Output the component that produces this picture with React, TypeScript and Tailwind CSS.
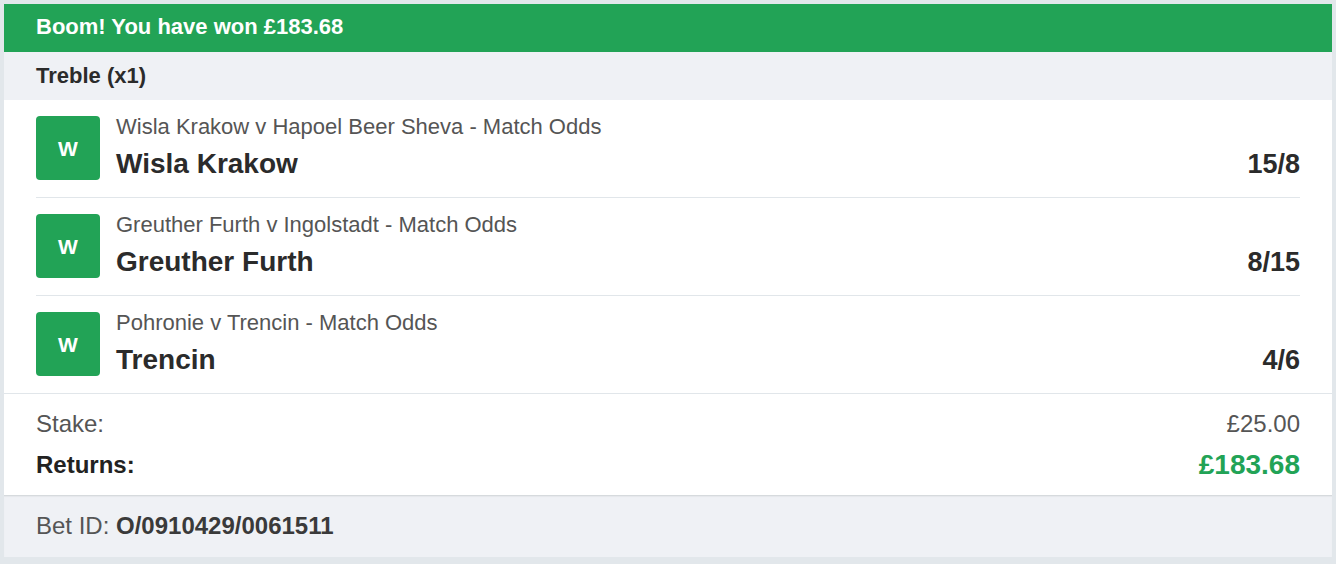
import React from 'react';

interface Selection {
  event: string;
  name: string;
  odds: string;
  result: string;
}

const selections: Selection[] = [
  { event: 'Wisla Krakow v Hapoel Beer Sheva - Match Odds', name: 'Wisla Krakow', odds: '15/8', result: 'W' },
  { event: 'Greuther Furth v Ingolstadt - Match Odds', name: 'Greuther Furth', odds: '8/15', result: 'W' },
  { event: 'Pohronie v Trencin - Match Odds', name: 'Trencin', odds: '4/6', result: 'W' },
];

function SelectionRow({ s, last }: { s: Selection; last: boolean }) {
  return (
    <div className="px-8">
      <div className={`flex gap-4 pt-4 pb-[17px] ${last ? '' : 'border-b border-[#e1e6ea]'}`}>
        <div className="w-16 h-16 shrink-0 rounded-[4px] bg-[#22a356] flex items-center justify-center">
          <span className="text-white font-bold text-[21px] leading-none">{s.result}</span>
        </div>
        <div className="flex-1 min-w-0">
          <div className="text-[22px] leading-[22px] text-[#555555]">{s.event}</div>
          <div className="mt-3 flex justify-between items-center">
            <span className="text-[28px] leading-[28px] font-bold text-[#2b2b2b]">{s.name}</span>
            <span className="text-[27px] leading-[28px] font-bold text-[#2b2b2b]">{s.odds}</span>
          </div>
        </div>
      </div>
    </div>
  );
}

export default function App() {
  return (
    <div className="min-h-screen bg-[#e2e7eb] p-1 pb-[6px]" style={{ fontFamily: '"Liberation Sans", Arial, sans-serif' }}>
      <div className="bg-white">
        {/* Win banner */}
        <div className="h-12 bg-[#22a356] flex items-center px-8 pb-[3px]">
          <span className="text-white font-bold text-[22px]">Boom! You have won £183.68</span>
        </div>

        {/* Bet type */}
        <div className="h-12 bg-[#eff1f5] flex items-center px-8 pb-[2px]">
          <span className="text-[#2b2b2b] font-bold text-[22px]">Treble (x1)</span>
        </div>

        {/* Legs */}
        <div className="border-b border-[#e1e6ea]">
          {selections.map((s, i) => (
            <SelectionRow key={i} s={s} last={i === selections.length - 1} />
          ))}
        </div>

        {/* Totals */}
        <div className="px-8 pt-[15px] pb-[15px] flex flex-col gap-[11px]">
          <div className="h-[30px] flex items-center justify-between text-[24px] text-[#555555]">
            <span>Stake:</span>
            <span>£25.00</span>
          </div>
          <div className="h-[30px] flex items-center justify-between">
            <span className="text-[24px] font-bold text-[#222222]">Returns:</span>
            <span className="text-[28px] font-bold text-[#22a356]">£183.68</span>
          </div>
        </div>

        {/* Bet id */}
        <div className="h-[62px] bg-[#eff1f5] border-t border-[#d6dadd] shadow-[inset_0_1px_1px_rgba(0,0,0,0.04)] flex items-center px-8 pb-[2px]">
          <span className="text-[24px] text-[#555555]">
            Bet ID: <span className="font-bold text-[#3a3a3a]">O/0910429/0061511</span>
          </span>
        </div>
      </div>
    </div>
  );
}
